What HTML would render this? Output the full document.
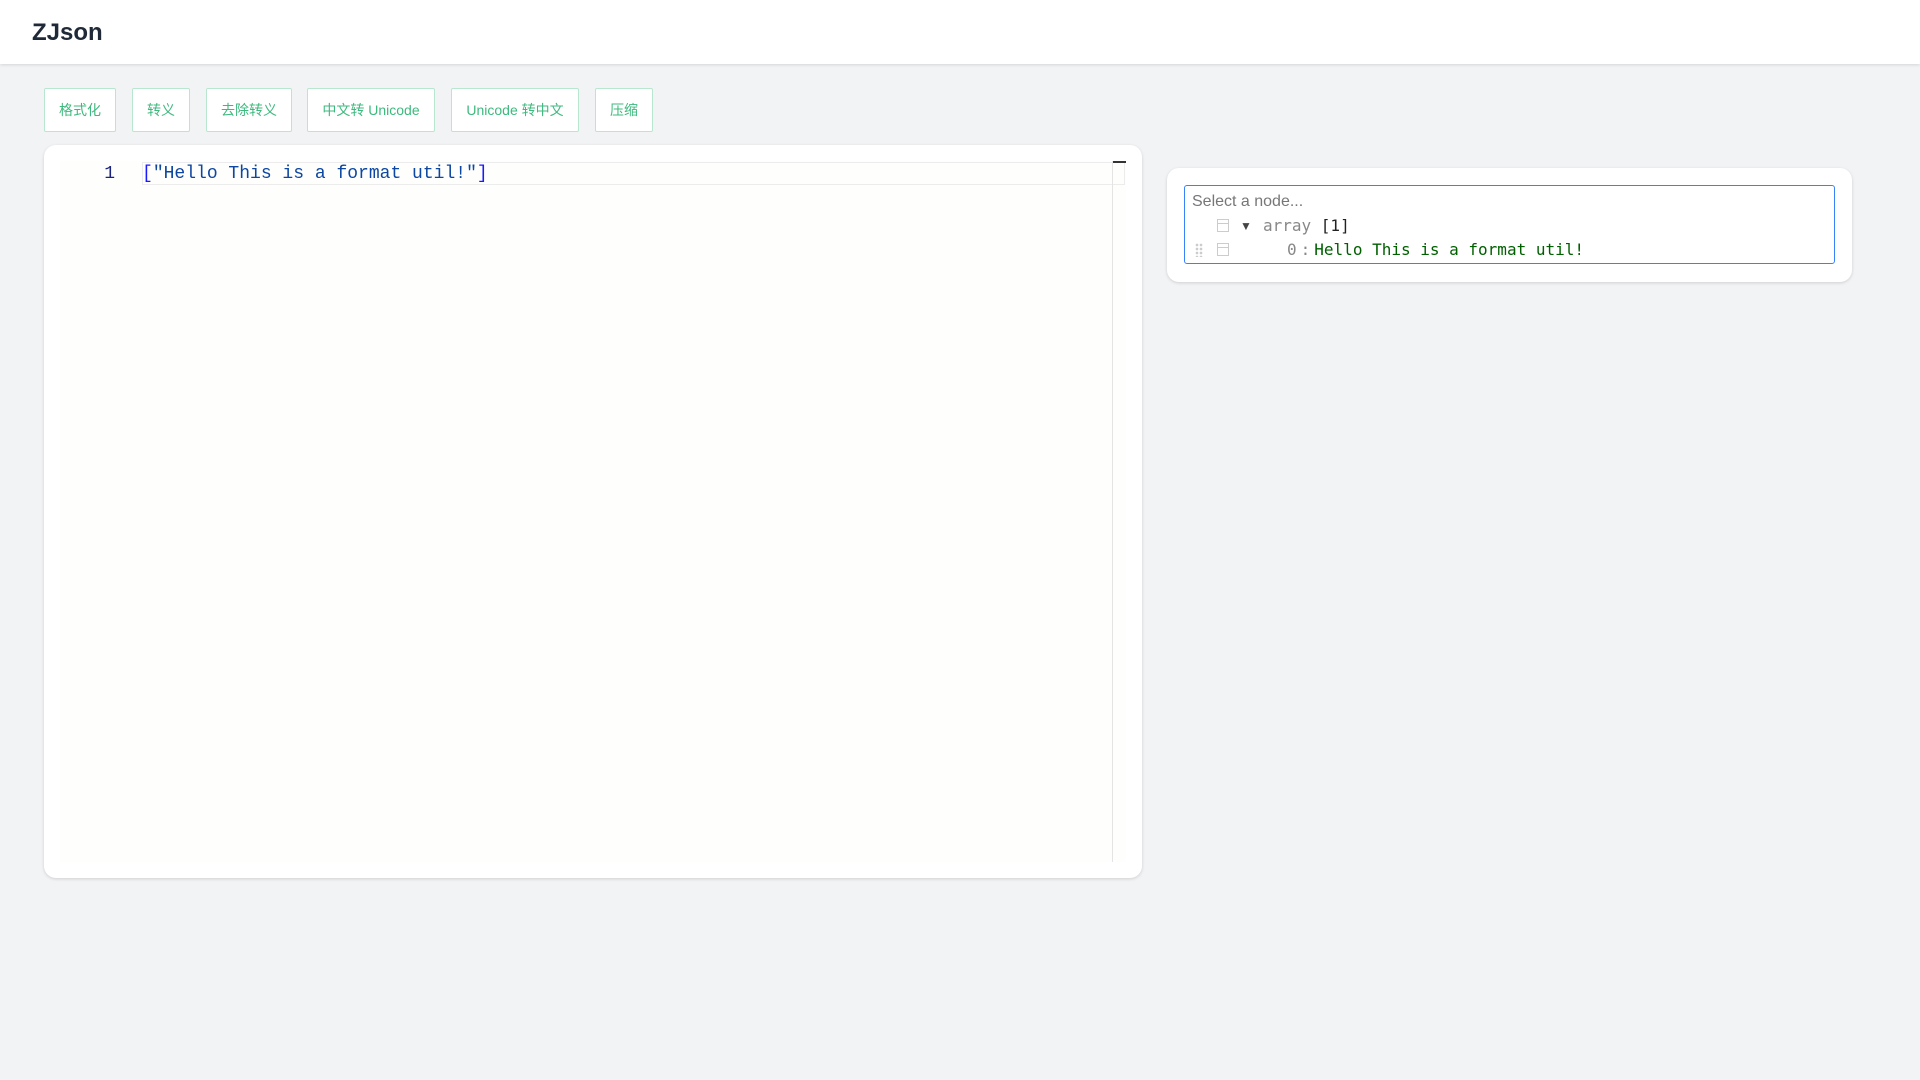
<!DOCTYPE html>
<html><head><meta charset="utf-8"><style>
*{box-sizing:border-box;margin:0;padding:0}
body{width:1920px;height:1080px;background:#f2f3f5;font-family:"Liberation Sans","Noto Sans CJK SC",sans-serif;position:relative;overflow:hidden}
.hdr{position:absolute;left:0;top:0;width:1920px;height:64px;background:#fff;box-shadow:0 1px 3px rgba(0,0,0,.12)}
.hdr h1{position:absolute;left:32px;top:19px;font-size:24px;font-weight:bold;color:#1f2937}
.btn{position:absolute;top:88px;height:44px;border:1px solid #b8e6cf;background:#fff;color:#3eb97e;font-size:14px;display:flex;align-items:center;justify-content:center;border-radius:2px}
.card{position:absolute;background:#fff;border-radius:12px;box-shadow:0 1px 3px rgba(0,0,0,.15)}
.ed{position:absolute;left:16px;top:16px;width:1066px;height:701px;background:#fefefd}
.mono{font-family:"Liberation Mono","DejaVu Sans Mono",monospace}
.dm{font-family:"DejaVu Sans Mono",monospace}
</style></head><body>
<div class="hdr"><h1>ZJson</h1></div>
<div class="btn" style="left:44px;width:72px">格式化</div>
<div class="btn" style="left:132px;width:58px">转义</div>
<div class="btn" style="left:206px;width:86px">去除转义</div>
<div class="btn" style="left:307px;width:128px">中文转 Unicode</div>
<div class="btn" style="left:451px;width:128px">Unicode 转中文</div>
<div class="btn" style="left:595px;width:58px">压缩</div>

<div class="card" style="left:44px;top:145px;width:1098px;height:733px">
 <div class="ed">
  <div style="position:absolute;left:82px;top:1px;width:983px;height:23px;border:1px solid #ececec"></div>
  <div style="position:absolute;left:1052px;top:0;width:1px;height:701px;background:#e4e4e4"></div>
  <div style="position:absolute;left:1053px;top:0;width:13px;height:2px;background:#333"></div>
  <div class="mono" style="position:absolute;left:20px;top:2px;width:35px;text-align:right;font-size:18px;color:#1a237e;line-height:22px">1</div>
  <div class="mono" style="position:absolute;left:82px;top:2px;font-size:18px;line-height:22px;color:#0d47a1;white-space:pre"><span style="color:#1a1aff">[</span>"Hello This is a format util!"<span style="color:#1a1aff">]</span></div>
 </div>
</div>

<div class="card" style="left:1167px;top:168px;width:685px;height:114px">
 <div style="position:absolute;left:17px;top:17px;width:651px;height:79px;border:1px solid #3883fa;border-radius:3px">
  <div style="position:absolute;left:7px;top:7px;font-size:16px;color:#777">Select a node...</div>
  <div style="position:absolute;left:32px;top:33px;width:12px;height:13px;border:1.5px solid #ccc"><div style="margin-top:3px;border-top:1.5px solid #ccc"></div></div>
  <div style="position:absolute;left:55px;top:33px;font-size:12px;color:#444">▼</div>
  <div class="dm" style="position:absolute;left:78px;top:30px;font-size:16px;color:#888">array <span style="color:#222">[1]</span></div>
  <div style="position:absolute;left:10px;top:57px;width:8px;height:14px;background:radial-gradient(circle,#ccc 1.2px,transparent 1.5px) 0 0/4px 4px"></div>
  <div style="position:absolute;left:32px;top:57px;width:12px;height:13px;border:1.5px solid #ccc"><div style="margin-top:3px;border-top:1.5px solid #ccc"></div></div>
  <div class="dm" style="position:absolute;left:102px;top:54px;font-size:16px;color:#888;white-space:pre">0<span style="margin-left:4px">:</span><span style="color:#006000;margin-left:4px">Hello This is a format util!</span></div>
 </div>
</div>
</body></html>
